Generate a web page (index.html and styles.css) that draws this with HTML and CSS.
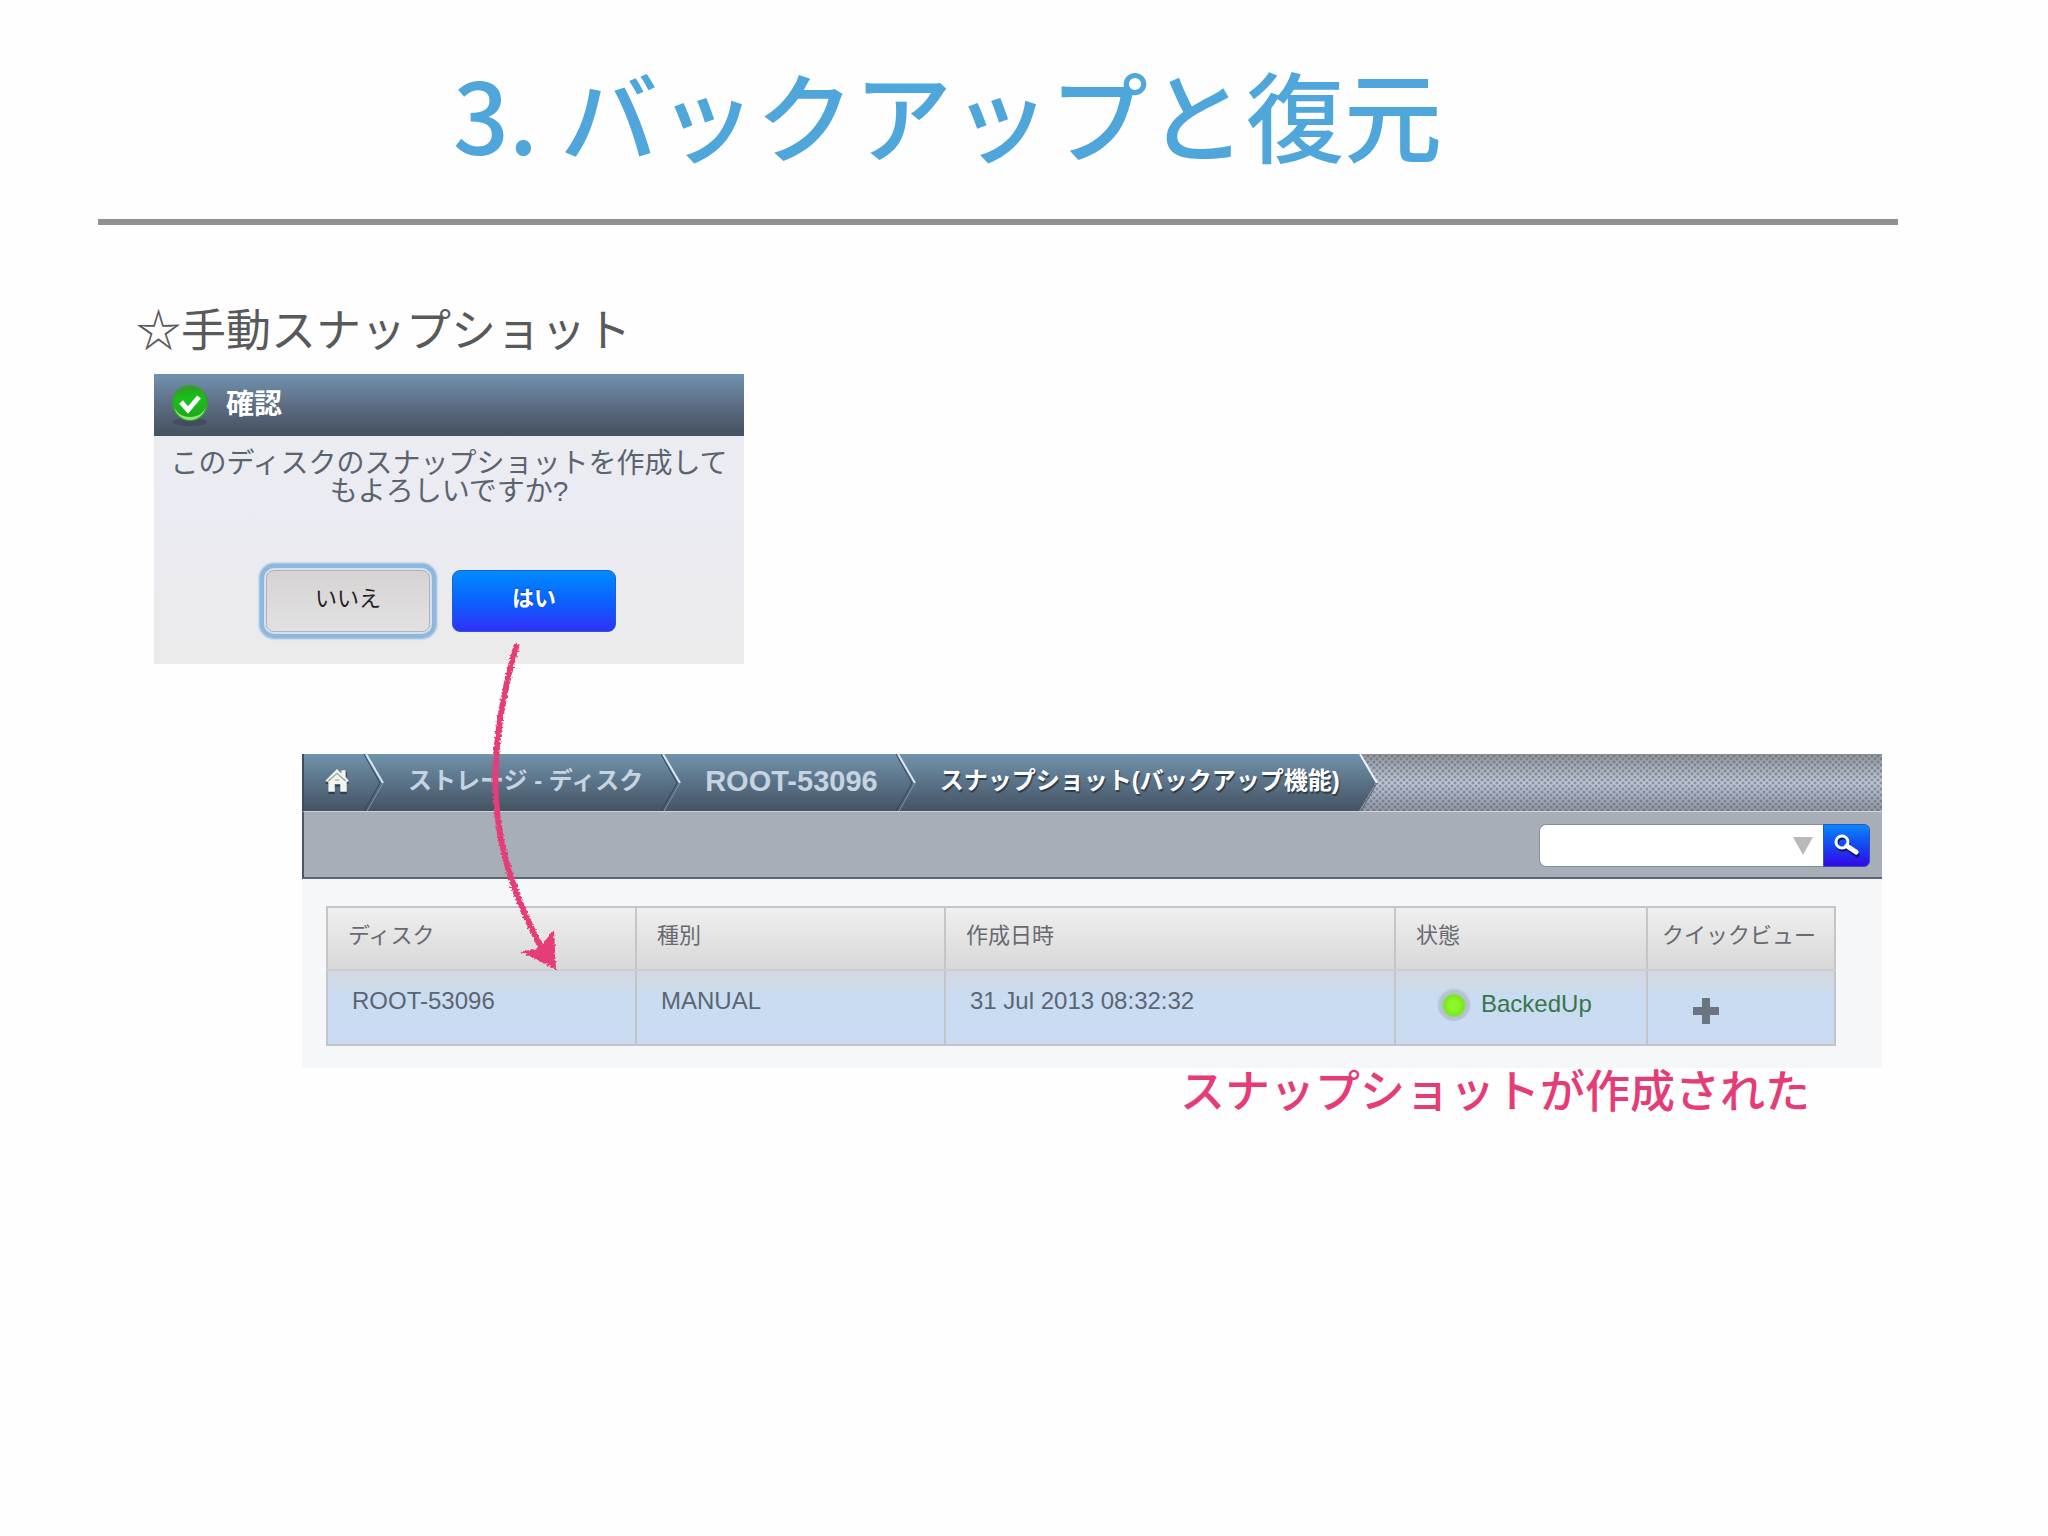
FILE: index.html
```html
<!DOCTYPE html>
<html lang="ja">
<head>
<meta charset="utf-8">
<title>3. バックアップと復元</title>
<link rel="stylesheet" href="styles.css">
</head>
<body>
<main class="slide">
  <h1 class="title">3. バックアップと復元</h1>
  <hr class="rule">
  <h2 class="subtitle">☆手動スナップショット</h2>

  <div class="step">
    <section class="dialog" role="dialog" aria-labelledby="dialog-title">
      <header class="dialog-head">
        <svg class="ok-icon" viewBox="0 0 38 42" aria-hidden="true">
          <defs>
            <linearGradient id="ok" x1="0" y1="0" x2="0" y2="1">
              <stop offset="0" stop-color="#2f9d1f"/><stop offset="0.35" stop-color="#17c21a"/><stop offset="1" stop-color="#1fa51f"/>
            </linearGradient>
          </defs>
          <ellipse cx="19" cy="38" rx="17" ry="4" fill="#2c3a4a" opacity="0.4"/>
          <ellipse cx="19" cy="19" rx="17" ry="17" fill="url(#ok)" stroke="#3f9a34" stroke-width="2"/>
          <path d="M3 20a16 16 0 0 0 32 0a16 13 0 0 1-32 0z" fill="#8fe578"/>
          <path d="M10 18l7 8L28 13" fill="none" stroke="#fff" stroke-width="5"/>
        </svg>
        <h3 class="dialog-title" id="dialog-title">確認</h3>
      </header>
      <p class="message">このディスクのスナップショットを作成して<br>もよろしいですか?</p>
      <div class="actions">
        <button class="btn btn-no" type="button">いいえ</button>
        <button class="btn btn-yes" type="button">はい</button>
      </div>
    </section>
    <svg class="arrow" viewBox="0 0 80 340" aria-hidden="true">
      <defs>
        <filter id="chalk" x="-20%" y="-5%" width="140%" height="110%">
          <feTurbulence type="fractalNoise" baseFrequency="0.5" numOctaves="2" seed="4"/>
          <feDisplacementMap in="SourceGraphic" scale="5" xChannelSelector="R" yChannelSelector="G"/>
        </filter>
      </defs>
      <g filter="url(#chalk)">
        <path d="M38 5C22 60 14 110 17 160C20 215 38 264 66 316" fill="none" stroke="#e53c78" stroke-width="6"/>
        <path d="M41 313L60 309L75 291L77 331Q58 320 41 313z" fill="#e53c78"/>
      </g>
    </svg>
  </div>

  <section class="panel">
    <nav class="crumbs" aria-label="パンくず">
      <ol class="crumb-list">
        <li class="crumb crumb-home">
          <a href="#" aria-label="ホーム">
            <svg class="home-icon" viewBox="0 0 24 24" aria-hidden="true">
              <path d="M1 13L12 3l5 4V2h4v8l2 3-2 1v9h-6v-7H10v7H4v-9z" fill="#2e3e4e" transform="translate(0 1)"/>
              <path d="M1 12L12 1l4 4V2h4v6l3 4-2 1v9h-6v-7h-5v7H4v-9z" fill="#f2f4ee"/>
              <path d="M4 12l8-7 8 7M10 11h4" fill="none" stroke="#8b979c" stroke-width="1"/>
            </svg>
          </a>
          <svg class="chevron" viewBox="0 0 20 57" aria-hidden="true"><path d="M0 0l16 29L0 57" fill="none" stroke="#33475a"/><path d="M2 0l17 29" stroke="#d8e8f4" stroke-width="2"/><path d="M19 29L3 57" stroke="#7f95a8"/></svg>
        </li>
        <li class="crumb">
          <a href="#">ストレージ - ディスク</a>
          <svg class="chevron" viewBox="0 0 20 57" aria-hidden="true"><path d="M0 0l16 29L0 57" fill="none" stroke="#33475a"/><path d="M2 0l17 29" stroke="#d8e8f4" stroke-width="2"/><path d="M19 29L3 57" stroke="#7f95a8"/></svg>
        </li>
        <li class="crumb crumb-id">
          <a href="#">ROOT-53096</a>
          <svg class="chevron" viewBox="0 0 20 57" aria-hidden="true"><path d="M0 0l16 29L0 57" fill="none" stroke="#33475a"/><path d="M2 0l17 29" stroke="#d8e8f4" stroke-width="2"/><path d="M19 29L3 57" stroke="#7f95a8"/></svg>
        </li>
        <li class="crumb crumb-current"><a href="#" aria-current="page">スナップショット(バックアップ機能)</a></li>
      </ol>
      <svg class="chevron" viewBox="0 0 20 57" aria-hidden="true">
        <defs>
          <linearGradient id="bar" x1="0" y1="0" x2="0" y2="1">
            <stop offset="0" stop-color="#7193ac"/><stop offset="0.5" stop-color="#5a7287"/><stop offset="1" stop-color="#455363"/>
          </linearGradient>
        </defs>
        <path d="M0 0h1l17 29L1 57H0z" fill="url(#bar)"/>
        <path d="M2 0l17 29" stroke="#eef5fa" stroke-width="2"/><path d="M19 29L3 57" stroke="#55626f"/>
      </svg>
    </nav>

    <form class="toolbar">
      <div class="search-box">
        <input class="search-input" type="text" aria-label="検索">
        <svg class="caret" viewBox="0 0 22 20" aria-hidden="true"><path d="M1 1h20L11 19z" fill="#b9b9b9"/></svg>
      </div>
      <button class="search-btn" type="button" aria-label="検索する">
        <svg class="glass" viewBox="0 0 28 24" aria-hidden="true">
          <g transform="translate(1 2)" stroke="#10186a" fill="none"><circle cx="9" cy="8" r="6" stroke-width="3"/><path d="M14 12l9 7" stroke-width="5" stroke-linecap="round"/></g>
          <g stroke="#fff" fill="none"><circle cx="9" cy="8" r="6" stroke-width="3"/><path d="M14 12l9 6" stroke-width="5" stroke-linecap="round"/></g>
        </svg>
      </button>
    </form>

    <div class="content">
      <table class="grid">
        <colgroup><col class="c-disk"><col class="c-type"><col class="c-date"><col class="c-state"><col class="c-view"></colgroup>
        <thead>
          <tr><th scope="col">ディスク</th><th scope="col">種別</th><th scope="col">作成日時</th><th scope="col">状態</th><th scope="col" class="th-view">クイックビュー</th></tr>
        </thead>
        <tbody>
          <tr>
            <td>ROOT-53096</td>
            <td>MANUAL</td>
            <td>31 Jul 2013 08:32:32</td>
            <td><span class="state"><span class="lamp"></span>BackedUp</span></td>
            <td>
              <button class="plus" type="button" aria-label="クイックビュー">
                <svg class="plus-icon" viewBox="0 0 28 28" aria-hidden="true"><path d="M10 1h8v9h9v8h-9v9h-8v-9H1v-8h9z" fill="#6b7580"/></svg>
              </button>
            </td>
          </tr>
        </tbody>
      </table>
    </div>
  </section>

  <p class="caption">スナップショットが作成された</p>
</main>
</body>
</html>
```
FILE: styles.css
```css
* {
  box-sizing: border-box;
}

body {
  margin: 0;
  background: #fefefe;
  font-family: "Liberation Sans", "Noto Sans CJK JP", sans-serif;
}

.slide {
  padding: 52px 0 64px;
}

.title {
  margin: 0;
  padding-left: 453px;
  font: 500 98px/120px "Noto Sans CJK JP", sans-serif;
  color: #4fa6da;
  white-space: nowrap;
}

.rule {
  height: 6px;
  margin: 47px 150px 0 98px;
  border: 0;
  background: #909090;
}

.subtitle {
  margin: 73px 0 0 136px;
  font: 400 45px/60px "Noto Sans CJK JP", sans-serif;
  color: #58595b;
}

.step {
  position: relative;
  width: 590px;
  margin: 16px 0 0 154px;
}

.dialog {
  padding-bottom: 32px;
  background: linear-gradient(#eceef2, #ebebf3 50%, #ebebeb);
}

.dialog-head {
  display: flex;
  align-items: center;
  gap: 17px;
  height: 62px;
  padding: 0 17px;
  background: linear-gradient(#7193ae, #5c6d84 50%, #44515f);
}

.ok-icon {
  width: 38px;
  height: 42px;
}

.dialog-title {
  margin: 0;
  font-size: 28px;
  line-height: 40px;
  font-weight: 700;
  color: #fff;
}

.message {
  margin: 0;
  padding-top: 14px;
  font-size: 28px;
  line-height: 28px;
  text-align: center;
  white-space: nowrap;
  color: #5b646e;
}

.actions {
  display: flex;
  gap: 22px;
  margin: 64px 0 0 112px;
}

.btn {
  width: 164px;
  height: 62px;
  padding: 0 0 4px;
  border: 1px solid #b4b4b4;
  border-radius: 8px;
  font: 22px/30px "Liberation Sans", "Noto Sans CJK JP", sans-serif;
}

.btn-no {
  background: linear-gradient(#d6d3d3, #e2e1e1);
  color: #222;
  box-shadow: 0 0 0 2px #d3e2f1, 0 0 2px 7px #8db7dd;
}

.btn-yes {
  border-color: #1c62c8;
  background: linear-gradient(#008cff, #0a62ff 50%, #3130f8);
  font-weight: 700;
  color: #fff;
  text-shadow: 0 -1px 1px #123a9a;
}

.arrow {
  position: absolute;
  left: 325px;
  top: 265px;
  z-index: 1;
  width: 80px;
  height: 340px;
}

.panel {
  margin: 90px 166px 0 302px;
  background: #f6f7f8;
}

.crumbs {
  display: flex;
  height: 58px;
  border-left: 2px solid #394d60;
  border-bottom: 1px solid #ccd3da;
  background:
    radial-gradient(circle at 2px 2px, rgba(84, 92, 106, 0.5) 1px, transparent 2px) 0 0 / 6px 6px,
    radial-gradient(circle at 2px 2px, rgba(84, 92, 106, 0.5) 1px, transparent 2px) 3px 3px / 6px 6px,
    linear-gradient(#94989f, #bfc9d9 50%, #9097a5);
}

.crumb-list {
  display: flex;
  margin: 0;
  padding: 0;
  list-style: none;
  background: linear-gradient(#7193ac, #5a7287 50%, #455363);
}

.crumb {
  display: flex;
  align-items: center;
  padding-left: 24px;
  font-size: 24px;
  line-height: 36px;
  font-weight: 700;
  white-space: nowrap;
}

.crumb a {
  margin: 0 18px 4px 0;
  color: #c6d3e0;
  text-decoration: none;
}

.crumb-home {
  padding-left: 20px;
}

.crumb-home a {
  margin-right: 14px;
}

.crumb-id {
  font-size: 29px;
}

.crumb-current a {
  color: #fff;
  text-shadow: 1px 2px 1px #2c3a48;
}

.home-icon {
  display: block;
  width: 26px;
  height: 26px;
}

.chevron {
  display: block;
  flex: none;
  width: 20px;
  height: 57px;
}

.toolbar {
  display: flex;
  justify-content: flex-end;
  align-items: center;
  height: 67px;
  padding: 2px 12px 0 0;
  border-left: 2px solid #4c5866;
  border-bottom: 2px solid #5c6570;
  background: #a7aeb8;
}

.search-box {
  display: flex;
  align-items: center;
  width: 284px;
  height: 43px;
  padding-right: 9px;
  border: 1px solid #888e96;
  border-right: 0;
  border-radius: 7px 0 0 7px;
  background: #fff;
}

.search-input {
  flex: 1;
  min-width: 0;
  padding: 0 12px;
  border: 0;
  background: transparent;
  font: 22px/30px "Liberation Sans", "Noto Sans CJK JP", sans-serif;
}

.caret {
  width: 22px;
  height: 20px;
}

.search-btn {
  display: flex;
  align-items: center;
  justify-content: center;
  width: 47px;
  height: 43px;
  padding: 0;
  border: 1px solid #2b55b8;
  border-radius: 0 6px 6px 0;
  background: linear-gradient(#0a86fb, #1447f2 50%, #3407e6);
}

.glass {
  width: 28px;
  height: 24px;
}

.content {
  padding: 27px 46px 22px 24px;
}

.grid {
  width: 100%;
  border-collapse: collapse;
  table-layout: fixed;
  color: #5b6573;
}

.c-disk,
.c-type {
  width: 309px;
}

.c-date {
  width: 450px;
}

.c-state {
  width: 252px;
}

.grid th,
.grid td {
  border: 2px solid #c3c5c9;
  text-align: left;
  vertical-align: top;
  white-space: nowrap;
}

.grid th {
  height: 63px;
  padding: 11px 0 0 20px;
  background: linear-gradient(#efeff0, #d8d8d9);
  border-bottom-color: #cccdd0;
  font-size: 22px;
  line-height: 34px;
  font-weight: 400;
  color: #686a70;
}

.grid .th-view {
  padding-left: 14px;
}

.grid td {
  height: 75px;
  padding: 14px 0 0 24px;
  background: linear-gradient(#d2d8e2, #d0dae7 18%, #cadcf1 32%, #cadbf3);
  font-size: 24px;
  line-height: 32px;
}

.state {
  display: flex;
  align-items: center;
  gap: 10px;
  padding: 2px 0 0 17px;
  color: #35774a;
}

.lamp {
  width: 34px;
  height: 34px;
  border-radius: 50%;
  background: radial-gradient(circle at 50% 54%, #8df52a 0 5px, #76e81c 10px, #b3c2cc 12px, #b7c5d4 15px, #c8d7e9 17px);
}

.plus {
  display: block;
  margin: 12px 0 0 20px;
  padding: 0;
  border: 0;
  background: none;
}

.plus-icon {
  display: block;
  width: 28px;
  height: 28px;
}

.caption {
  margin: 0 238px 0 0;
  font: 500 45px/42px "Noto Sans CJK JP", sans-serif;
  text-align: right;
  color: #e53c78;
}
```
